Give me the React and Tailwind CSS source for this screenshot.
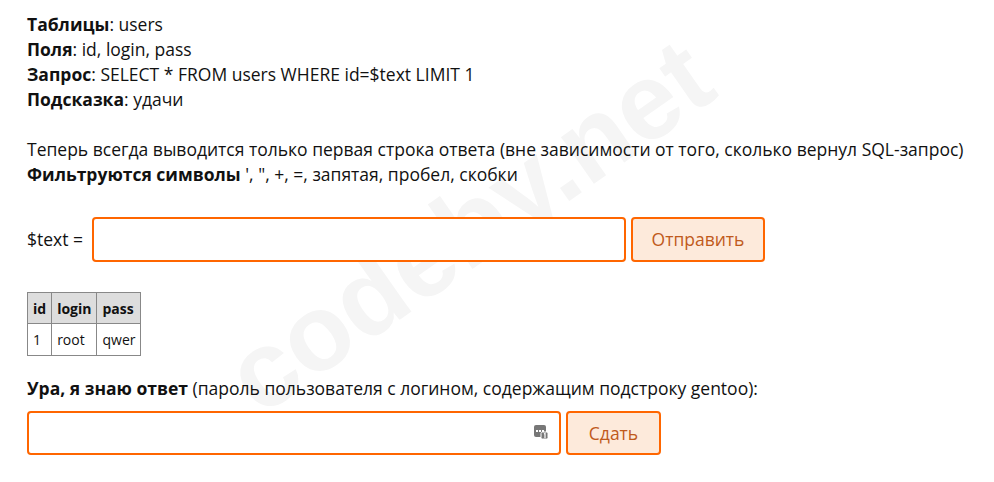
import React from "react";

const font = { fontFamily: '"Open Sans", "Liberation Sans", Arial, sans-serif' };

function Watermark() {
  return (
    <div
      className="pointer-events-none absolute left-[188px] top-[172px] -rotate-[35deg] select-none whitespace-nowrap text-[108px] font-bold leading-none text-[#f5f5f5]"
      style={{ fontFamily: '"Liberation Sans", Arial, sans-serif' }}
    >
      codeby.net
    </div>
  );
}

function InfoBlock() {
  return (
    <div className="leading-[25px]">
      <div><b>Таблицы</b>: users</div>
      <div><b>Поля</b>: id, login, pass</div>
      <div><b>Запрос</b>: SELECT * FROM users WHERE id=$text LIMIT 1</div>
      <div><b>Подсказка</b>: удачи</div>
    </div>
  );
}

function ResultTable() {
  return (
    <table className="mt-[30px] border-collapse text-[14px]">
      <thead>
        <tr className="bg-[#dddddd]">
          <th className="h-[31px] border border-[#888] px-[5px] text-left font-bold">id</th>
          <th className="border border-[#888] px-[5px] text-left font-bold">login</th>
          <th className="border border-[#888] px-[5px] text-left font-bold">pass</th>
        </tr>
      </thead>
      <tbody>
        <tr>
          <td className="h-[32px] border border-[#888] px-[5px]">1</td>
          <td className="border border-[#888] px-[5px]">root</td>
          <td className="border border-[#888] px-[5px]">qwer</td>
        </tr>
      </tbody>
    </table>
  );
}

function KeyIcon() {
  return (
    <svg width="16" height="16" viewBox="0 0 16 16" className="absolute right-[12px] top-[13px]">
      <rect x="1" y="1" width="12" height="12" rx="2" fill="#777" />
      <rect x="3" y="6" width="2" height="2" fill="#fff" />
      <rect x="6" y="6" width="2" height="2" fill="#fff" />
      <rect x="9" y="6" width="2" height="2" fill="#fff" />
      <rect x="8" y="8" width="7" height="7" rx="1.5" fill="#777" stroke="#fff" strokeWidth="1" />
      <path d="M11 10 L12 9.5 L12 14" stroke="#fff" strokeWidth="1.2" fill="none" />
    </svg>
  );
}

export default function App() {
  return (
    <div className="relative h-[482px] w-[994px] overflow-hidden bg-white text-[17.5px] text-[#111]" style={font}>
      <Watermark />
      <div className="relative px-[27px] pt-[12px]">
        <InfoBlock />
        <div className="mt-[25px] leading-[25px]">
          <div className="whitespace-nowrap">Теперь всегда выводится только первая строка ответа (вне зависимости от того, сколько вернул SQL-запрос)</div>
          <div><b>Фильтруются символы</b> ', ", +, =, запятая, пробел, скобки</div>
        </div>
        <div className="mt-[30px] flex items-center gap-[5px]">
          <span className="w-[60px] shrink-0">$text =</span>
          <input className="h-[45px] w-[534px] rounded-[4px] border-2 border-[#ff6600] bg-white px-2 outline-none" />
          <button className="h-[45px] w-[134px] rounded-[4px] border-2 border-[#ff6600] bg-[#fdeadb] text-[#c05a1c]">Отправить</button>
        </div>
        <ResultTable />
        <div className="mt-[20px] leading-[25px]">
          <b>Ура, я знаю ответ</b> (пароль пользователя с логином, содержащим подстроку gentoo):
        </div>
        <div className="mt-[10px] flex items-center gap-[5px]">
          <div className="relative">
            <input className="h-[44px] w-[534px] rounded-[4px] border-2 border-[#ff6600] bg-white px-2 outline-none" />
            <KeyIcon />
          </div>
          <button className="h-[44px] w-[95px] rounded-[4px] border-2 border-[#ff6600] bg-[#fdeadb] text-[#c05a1c]">Сдать</button>
        </div>
      </div>
    </div>
  );
}
